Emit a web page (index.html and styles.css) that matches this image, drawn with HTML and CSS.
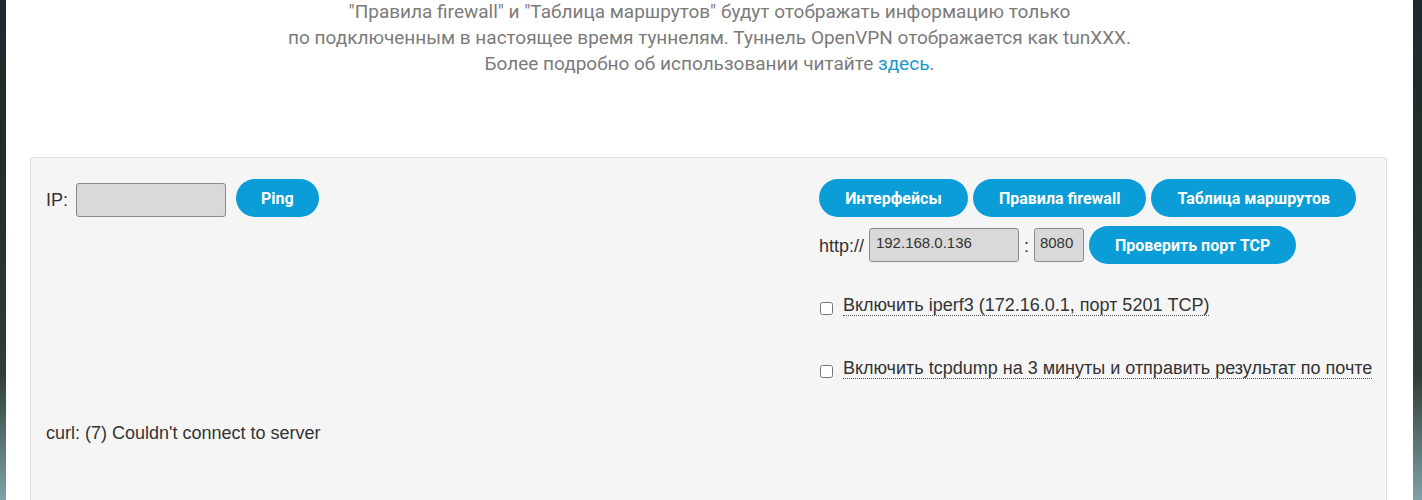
FILE: index.html
```html
<!DOCTYPE html>
<html lang="ru">
<head>
<meta charset="utf-8">
<title>Диагностика</title>
<link rel="stylesheet" href="styles.css">
</head>
<body>
<div class="page">
  <div class="intro">
    <p>"Правила firewall" и "Таблица маршрутов" будут отображать информацию только</p>
    <p>по подключенным в настоящее время туннелям. Туннель OpenVPN отображается как tunXXX.</p>
    <p>Более подробно об использовании читайте <a href="#" class="link">здесь</a>.</p>
  </div>

  <div class="panel">
    <div class="grid">
      <div class="col-left">
        <div class="row">
          <span class="label">IP:</span>
          <input class="field field-ip" type="text">
          <button class="btn btn-ping">Ping</button>
        </div>
      </div>
      <div class="col-right">
        <div class="row btn-row">
          <button class="btn btn-wide">Интерфейсы</button>
          <button class="btn">Правила firewall</button>
          <button class="btn">Таблица маршрутов</button>
        </div>
        <div class="row port-row">
          <span class="label">http://</span>
          <input class="field field-host" type="text" value="192.168.0.136">
          <span class="colon">:</span>
          <input class="field field-port" type="text" value="8080">
          <button class="btn">Проверить порт TCP</button>
        </div>
        <label class="check check-first">
          <input type="checkbox">
          <span class="check-text">Включить iperf3 (172.16.0.1, порт 5201 TCP)</span>
        </label>
        <label class="check">
          <input type="checkbox">
          <span class="check-text">Включить tcpdump на 3 минуты и отправить результат по почте</span>
        </label>
      </div>
    </div>
    <div class="result">curl: (7) Couldn't connect to server</div>
  </div>
</div>
</body>
</html>
```

FILE: styles.css
```css
* { box-sizing: border-box; }

html, body {
  margin: 0;
  padding: 0;
  height: 500px;
  overflow: hidden;
}

body {
  background: linear-gradient(180deg, #1b2a2c 0%, #24322c 45%, #2f3e36 75%, #7fa2a8 100%);
  font-family: "Liberation Sans", Arial, sans-serif;
}

.page {
  margin-left: 6px;
  width: 1407px;
  height: 500px;
  background: #ffffff;
  padding-top: 0;
  overflow: hidden;
}

.intro {
  text-align: center;
  font-family: Roboto, "Noto Sans", sans-serif;
  font-size: 19px;
  line-height: 26px;
  color: #7b7b7b;
  margin-top: -1px;
}

.intro p { margin: 0; }

.link {
  color: #1a97cf;
  text-decoration: none;
}

.panel {
  margin: 80px 26px 0 24px;
  background: #f5f5f5;
  border: 1px solid #dedede;
  border-bottom: none;
  border-radius: 3px 3px 0 0;
  padding: 21px 15px 0;
  height: 400px;
  color: #333333;
  font-size: 18px;
}

.grid {
  display: grid;
  grid-template-columns: 7fr 5fr;
}

.col-right { min-width: 0; }

.row {
  display: flex;
  align-items: flex-start;
}

.label {
  line-height: 20px;
}

.col-left .label {
  margin-right: 8px;
  margin-top: 11px;
}

.field {
  height: 34px;
  background: #d9d9d9;
  border: 1px solid #8a8a8a;
  border-radius: 3px;
  font-family: "Liberation Sans", Arial, sans-serif;
  font-size: 15px;
  color: #333;
  padding: 0 6px 6px;
  margin: 0;
}

.field-ip {
  width: 150px;
  margin-top: 4px;
  margin-right: 10px;
}

.btn {
  height: 38px;
  border: none;
  border-radius: 19px;
  background: #0a9dd8;
  color: #ffffff;
  font-family: Roboto, "Noto Sans", sans-serif;
  font-weight: 700;
  font-size: 16px;
  padding: 0 26px;
  margin: 0;
  cursor: pointer;
  white-space: nowrap;
}

.btn-ping { padding: 0 25px; }

.btn-row { gap: 5px; }
.btn-wide { min-width: 149px; }

.port-row {
  margin-top: 9px;
}

.port-row .label {
  margin-right: 5px;
  margin-top: 10px;
}

.port-row .field { margin-top: 2px; }

.port-row .btn { margin-left: 5px; }

.field-host { width: 150px; }
.field-port { width: 50px; padding: 0 5px 6px; }

.colon {
  width: 15px;
  text-align: center;
  line-height: 20px;
  margin-top: 10px;
}

.check {
  display: flex;
  align-items: center;
  line-height: 20px;
  margin-top: 43px;
  white-space: nowrap;
}

.check-first { margin-top: 32px; }

.check input {
  flex: none;
  width: 13px;
  height: 13px;
  margin: 4px 10px 0 1px;
}

.check-text {
  border-bottom: 1px dotted #555;
  line-height: 19px;
}

.result {
  margin-top: 44px;
  line-height: 20px;
}
```
